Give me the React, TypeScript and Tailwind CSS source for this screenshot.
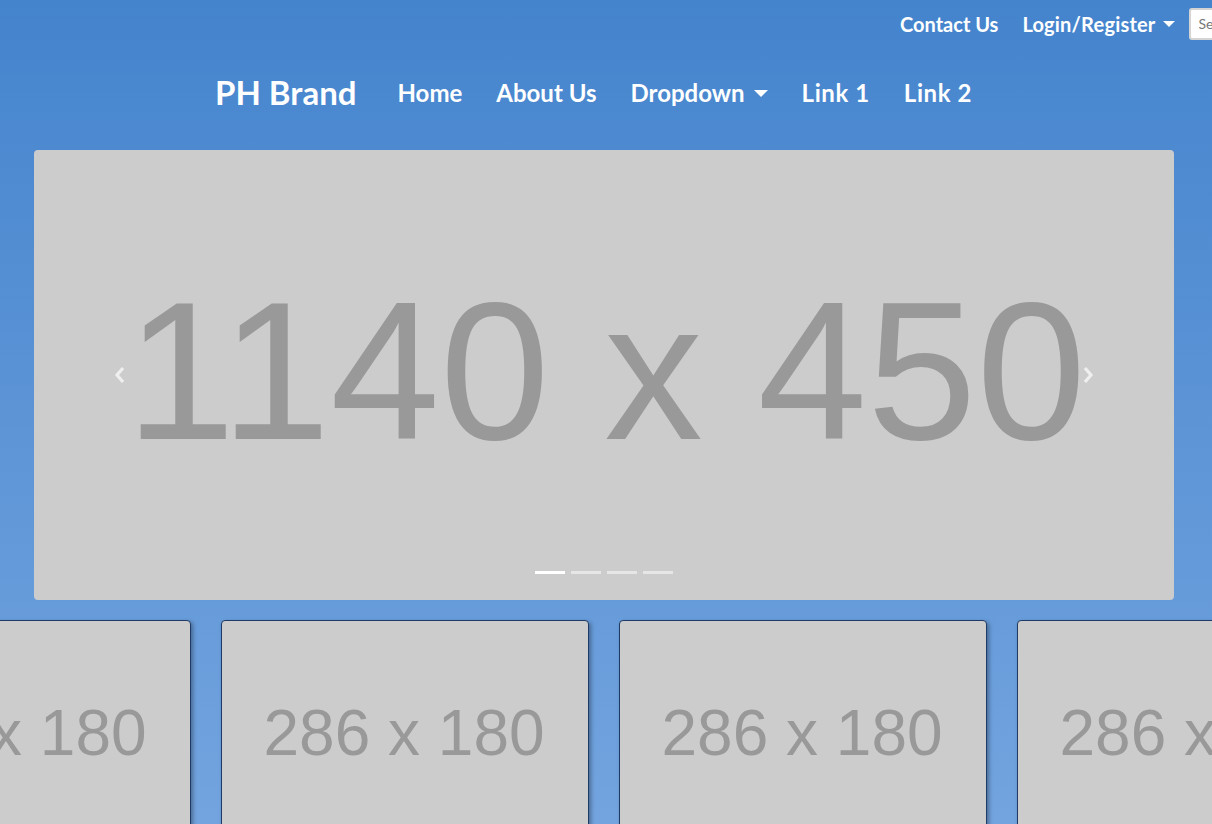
import { useState } from "react";

const navLinks = ["Home", "About Us", "Dropdown", "Link 1", "Link 2"];

const Caret = ({ big }: { big?: boolean }) => (
  <span
    className={
      big
        ? "ml-[9px] inline-block h-0 w-0 border-x-[7px] border-t-[7px] border-x-transparent border-t-white align-middle"
        : "ml-[7px] inline-block h-0 w-0 border-x-[6px] border-t-[6px] border-x-transparent border-t-white align-middle"
    }
  />
);

const Chevron = ({ dir }: { dir: "left" | "right" }) => (
  <svg width="14" height="20" viewBox="0 0 14 20" className="opacity-70">
    <path
      d={dir === "left" ? "M10 3 L4 10 L10 17" : "M4 3 L10 10 L4 17"}
      fill="none"
      stroke="white"
      strokeWidth="3.2"
    />
  </svg>
);

const Card = () => (
  <div className="h-[240px] w-[368px] shrink-0 overflow-hidden rounded-[4px] border border-[#1d3b66] bg-[#cccccc] shadow-[2px_2px_4px_rgba(0,0,0,0.35)]">
    <div className="flex h-[231px] items-center justify-center pb-[8px] pr-[2px] text-[64px] text-[#999999]">
      286 x 180
    </div>
  </div>
);

export default function App() {
  const [active] = useState(0);

  return (
    <div
      className="h-[824px] w-[1212px] overflow-hidden bg-gradient-to-b from-[#4484cd] to-[#73a4df] text-white"
      style={{ fontFamily: "Lato, 'Noto Sans', sans-serif" }}
    >
      {/* top bar */}
      <div className="flex h-[48px] items-center whitespace-nowrap pb-[1px] pl-[900px] text-[20px] font-bold">
        <span>Contact Us</span>
        <span className="ml-[24px] flex items-center">
          <span className="tracking-[0.2px]">Login/Register</span>
          <Caret />
        </span>
        <input
          placeholder="Search"
          className="ml-[14px] h-[32px] w-[160px] shrink-0 rounded-[3px] border-2 border-[#d4d4d4] bg-white px-[8px] text-[14px] font-normal text-black placeholder:text-[#777]"
        />
      </div>

      {/* main nav */}
      <div className="flex h-[92px] items-center whitespace-nowrap pb-[2px] pl-[215px]">
        <span className="text-[33px] font-bold">PH Brand</span>
        <nav className="ml-[41px] flex items-center gap-[34px] text-[24px] font-bold">
          {navLinks.map((l) => (
            <span
              key={l}
              className={
                l.startsWith("Link")
                  ? "flex items-center tracking-[0.6px]"
                  : "flex items-center"
              }
            >
              {l}
              {l === "Dropdown" && <Caret big />}
            </span>
          ))}
        </nav>
      </div>

      {/* hero carousel */}
      <div className="relative mx-[34px] mt-[10px] flex h-[450px] w-[1140px] items-center justify-center rounded-[4px] bg-[#cccccc]">
        <span
          className="whitespace-nowrap pb-[8px] pl-[4px] text-[197px] leading-none text-[#999999]"
          style={{ fontFamily: "'Liberation Sans', Arial, sans-serif" }}
        >
          1140 x 450
        </span>
        <div className="absolute left-[79px] top-[215px]">
          <Chevron dir="left" />
        </div>
        <div className="absolute left-[1047px] top-[215px]">
          <Chevron dir="right" />
        </div>
        <div className="absolute bottom-[26px] left-0 right-0 flex justify-center gap-[6px]">
          {[0, 1, 2, 3].map((i) => (
            <span
              key={i}
              className={
                i === active
                  ? "h-[3px] w-[30px] bg-white"
                  : "h-[3px] w-[30px] bg-white/50"
              }
            />
          ))}
        </div>
      </div>

      {/* card strip */}
      <div
        className="ml-[-177px] mt-[20px] flex gap-[30px]"
        style={{ fontFamily: "'Liberation Sans', Arial, sans-serif" }}
      >
        <Card />
        <Card />
        <Card />
        <Card />
      </div>
    </div>
  );
}
